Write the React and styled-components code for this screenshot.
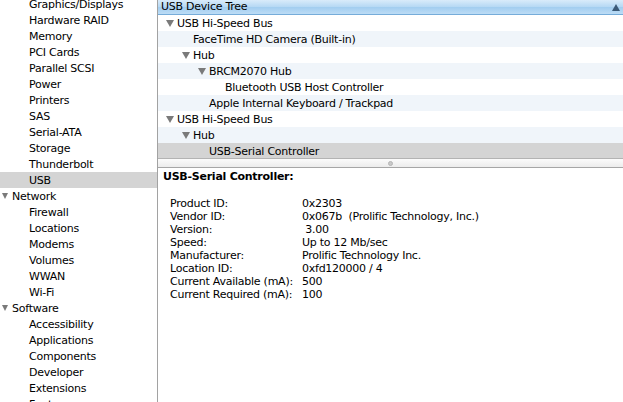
import React from "react";
import styled, { createGlobalStyle } from "styled-components";

const Global = createGlobalStyle`
  html, body { margin: 0; padding: 0; background: #fff; overflow: hidden; }
  body { font-family: "DejaVu Sans", "Lucida Grande", sans-serif; font-size: 11px; letter-spacing: -0.25px; color: #000; }
`;

const Window = styled.div`
  display: flex;
  width: 623px;
  height: 402px;
  overflow: hidden;
  background: #fff;
`;

const Sidebar = styled.div`
  width: 157px;
  flex: none;
  border-right: 1px solid #a2a2a2;
  overflow: hidden;
`;

const SidebarList = styled.div`
  margin-top: -4px;
  display: flex;
  flex-direction: column;
`;

const SidebarItem = styled.div`
  height: 16px;
  box-sizing: border-box;
  padding-top: 1px;
  display: flex;
  align-items: center;
  gap: 4px;
  white-space: nowrap;
  padding-left: ${(p) => (p.$category ? 2 : 29)}px;
  background: ${(p) => (p.$selected ? "#d4d4d4" : "transparent")};
`;

const Disclosure = styled.span`
  width: 0;
  height: 0;
  flex: none;
  border-left: ${(p) => p.$half}px solid transparent;
  border-right: ${(p) => p.$half}px solid transparent;
  border-top: ${(p) => p.$half * 2 - 1}px solid #7a7a7a;
  margin-top: -1px;
`;

const Main = styled.div`
  flex: 1;
  display: flex;
  flex-direction: column;
  min-width: 0;
`;

const TreePane = styled.div`
  height: 158px;
  flex: none;
  overflow: hidden;
  display: flex;
  flex-direction: column;
`;

const ColumnHeader = styled.div`
  height: 14px;
  flex: none;
  border-bottom: 1px solid #76acd9;
  background: linear-gradient(#d9ebfa, #b5d8f4 50%, #a2cdf0 51%, #bcdcf5);
  display: flex;
  align-items: center;
  justify-content: space-between;
  padding: 0 3px 0 3px;
  line-height: 14px;
`;

const SortArrow = styled.span`
  width: 0;
  height: 0;
  border-left: 4px solid transparent;
  border-right: 4px solid transparent;
  border-bottom: 7px solid #3b5a78;
`;

const TreeRow = styled.div`
  height: 16px;
  box-sizing: border-box;
  padding-top: 1px;
  flex: none;
  display: flex;
  align-items: center;
  gap: 3px;
  white-space: nowrap;
  padding-left: ${(p) => 8 + p.$level * 16 + (p.$leaf ? 11 : 0)}px;
  background: ${(p) => (p.$selected ? "#d4d4d4" : p.$odd ? "#f0f5fa" : "#fff")};
`;

const Splitter = styled.div`
  height: 8px;
  flex: none;
  border-top: 1px solid #b3b3b3;
  border-bottom: 1px solid #a6a6a6;
  background: linear-gradient(#fbfbfb, #ececec);
  display: flex;
  align-items: center;
  justify-content: center;
`;

const Dimple = styled.span`
  width: 3px;
  height: 3px;
  border-radius: 50%;
  background: #c9c9c9;
  border: 1px solid #b5b5b5;
`;

const Details = styled.div`
  flex: 1;
  padding: 2px 5px;
  overflow: hidden;
`;

const Title = styled.div`
  font-weight: bold;
  line-height: 13px;
`;

const PropGrid = styled.div`
  display: grid;
  grid-template-columns: 132px 1fr;
  margin-top: 14px;
  padding-left: 7px;
  line-height: 13px;
  white-space: pre;
`;

const sidebar = [
  ["Graphics/Displays"],
  ["Hardware RAID"],
  ["Memory"],
  ["PCI Cards"],
  ["Parallel SCSI"],
  ["Power"],
  ["Printers"],
  ["SAS"],
  ["Serial-ATA"],
  ["Storage"],
  ["Thunderbolt"],
  ["USB", "sel"],
  ["Network", "cat"],
  ["Firewall"],
  ["Locations"],
  ["Modems"],
  ["Volumes"],
  ["WWAN"],
  ["Wi-Fi"],
  ["Software", "cat"],
  ["Accessibility"],
  ["Applications"],
  ["Components"],
  ["Developer"],
  ["Extensions"],
  ["Fonts"],
];

const tree = [
  { t: "USB Hi-Speed Bus", l: 0 },
  { t: "FaceTime HD Camera (Built-in)", l: 1, leaf: true },
  { t: "Hub", l: 1 },
  { t: "BRCM2070 Hub", l: 2 },
  { t: "Bluetooth USB Host Controller", l: 3, leaf: true },
  { t: "Apple Internal Keyboard / Trackpad", l: 2, leaf: true },
  { t: "USB Hi-Speed Bus", l: 0 },
  { t: "Hub", l: 1 },
  { t: "USB-Serial Controller", l: 2, leaf: true, sel: true },
];

const props = [
  ["Product ID:", "0x2303"],
  ["Vendor ID:", "0x067b  (Prolific Technology, Inc.)"],
  ["Version:", " 3.00"],
  ["Speed:", "Up to 12 Mb/sec"],
  ["Manufacturer:", "Prolific Technology Inc."],
  ["Location ID:", "0xfd120000 / 4"],
  ["Current Available (mA):", "500"],
  ["Current Required (mA):", "100"],
];

export default function App() {
  return (
    <Window>
      <Global />
      <Sidebar>
        <SidebarList>
          {sidebar.map(([name, kind]) => (
            <SidebarItem key={name} $category={kind === "cat"} $selected={kind === "sel"}>
              {kind === "cat" && <Disclosure $half={3.5} />}
              {name}
            </SidebarItem>
          ))}
        </SidebarList>
      </Sidebar>
      <Main>
        <TreePane>
          <ColumnHeader>
            <span>USB Device Tree</span>
            <SortArrow />
          </ColumnHeader>
          {tree.map((r, i) => (
            <TreeRow key={i} $level={r.l} $leaf={r.leaf} $odd={i % 2 === 1} $selected={r.sel}>
              {!r.leaf && <Disclosure $half={4} />}
              {r.t}
            </TreeRow>
          ))}
        </TreePane>
        <Splitter>
          <Dimple />
        </Splitter>
        <Details>
          <Title>USB-Serial Controller:</Title>
          <PropGrid>
            {props.map(([k, v]) => (
              <React.Fragment key={k}>
                <span>{k}</span>
                <span>{v}</span>
              </React.Fragment>
            ))}
          </PropGrid>
        </Details>
      </Main>
    </Window>
  );
}
